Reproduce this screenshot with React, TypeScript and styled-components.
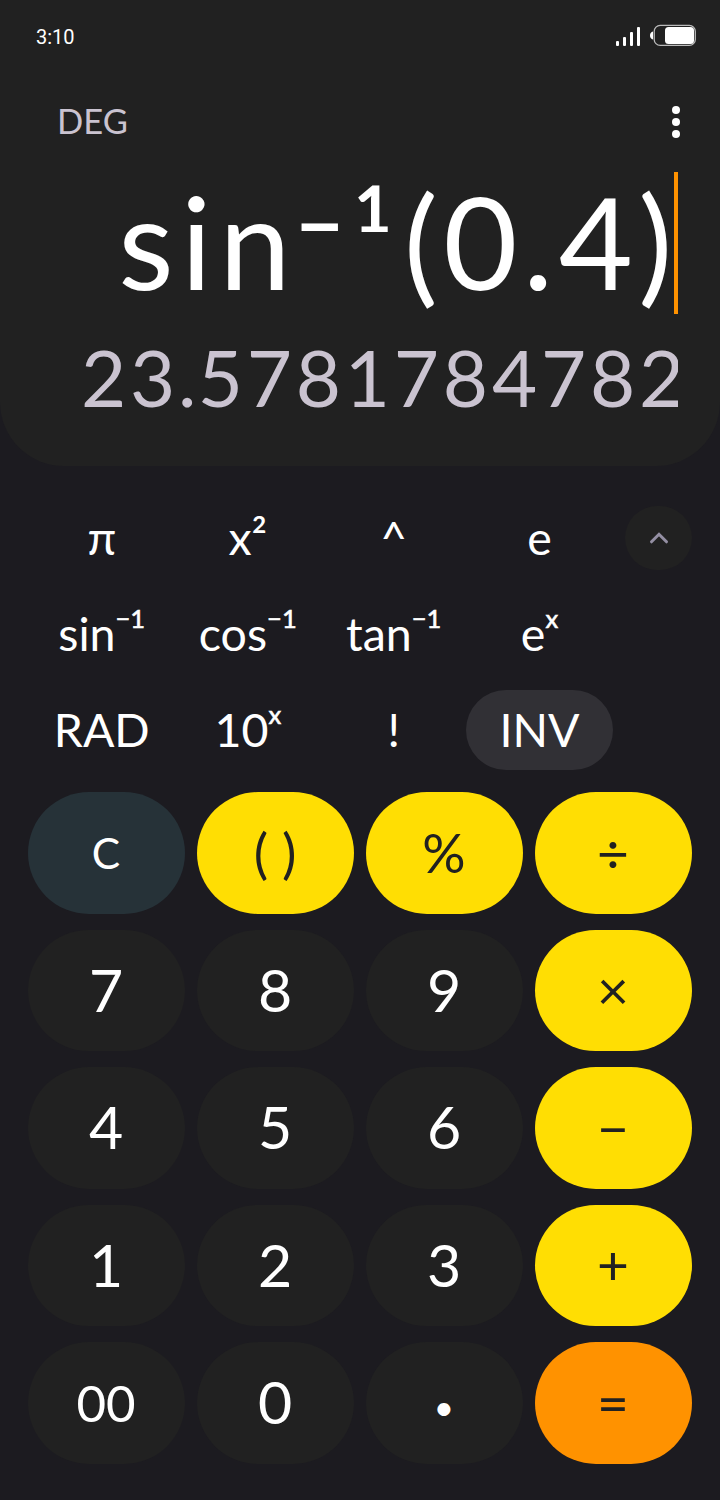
import React, { ReactNode } from "react";
import styled, { createGlobalStyle } from "styled-components";

const GlobalStyle = createGlobalStyle`
  * { box-sizing: border-box; }
  body { margin: 0; background: #1c1b20; }
`;

const Screen = styled.main`
  width: 720px;
  height: 1500px;
  display: flex;
  flex-direction: column;
  overflow: hidden;
  background: #1c1b20;
  color: #fff;
  font-family: Lato, "Noto Sans", sans-serif;
`;

const Display = styled.section`
  height: 466px;
  flex: none;
  display: flex;
  flex-direction: column;
  background: #212121;
  border-radius: 0 0 64px 64px;
`;

const StatusBar = styled.div`
  height: 72px;
  padding: 0 24px 0 36px;
  display: flex;
  align-items: center;
  justify-content: space-between;
`;

const Clock = styled.span`
  font: 400 20px/24px Roboto, sans-serif;
  padding-top: 2px;
`;

const Header = styled.div`
  height: 100px;
  padding: 0 40px 0 57px;
  display: flex;
  align-items: center;
  justify-content: space-between;
`;

const AngleMode = styled.span`
  font-size: 34.5px;
  line-height: 40px;
  padding-bottom: 2px;
  color: #cac3d0;
`;

const Expression = styled.div`
  height: 142px;
  padding-right: 42px;
  display: flex;
  align-items: stretch;
  justify-content: flex-end;
  font-size: 128px;
  line-height: 137px;
  letter-spacing: 0.0425em;
  white-space: pre;
`;

const FunctionName = styled.span`
  letter-spacing: 0.058em;
  margin-right: -2px;
`;

const RaisedMinus = styled.span`
  font-size: 82px;
  font-weight: 700;
  line-height: 0;
  letter-spacing: 0;
  vertical-align: 35px;
  margin-right: 8px;
`;

const RaisedOne = styled.span`
  margin-right: 4px;
  position: relative;
  top: -1px;
`;

const Cursor = styled.span`
  width: 4px;
  flex: none;
  margin-left: -4px;
  background: #ff9200;
`;

const ResultClip = styled.div`
  height: 100px;
  margin: 13px 42px 0 40px;
  overflow: hidden;
  display: flex;
  padding-left: 41px;
  font-size: 78px;
  line-height: 100px;
  letter-spacing: 0.0485em;
  color: #cac3d0;
  white-space: nowrap;
`;

const Point = styled.span`
  margin: 0 -2.5px 0 -1px;
`;

const Functions = styled.section`
  height: 288px;
  margin-top: 24px;
  padding: 0 28px;
  display: flex;
  justify-content: space-between;
`;

const FunctionGrid = styled.div`
  display: grid;
  grid-template-columns: 146px 146px 146px 147px;
  grid-template-rows: repeat(3, 80px);
  row-gap: 16px;
  padding-top: 8px;
`;

const FunctionKey = styled.button<{ $active?: boolean }>`
  border: 0;
  padding: 0 0 2px;
  border-radius: 40px;
  background: ${(p) => (p.$active ? "#313035" : "transparent")};
  color: #fff;
  font: 400 46.5px/78px Lato, "Noto Sans", sans-serif;
  white-space: nowrap;

  &:not(:nth-child(4n)) {
    padding-left: 1.5px;
  }
`;

const Power = styled.span`
  font-size: 25.5px;
  line-height: 0;
  vertical-align: 23px;
  -webkit-text-stroke: 0.6px #fff;
`;

const Collapse = styled.button`
  width: 67px;
  height: 64px;
  margin-top: 16px;
  border: 0;
  padding: 0;
  border-radius: 33px;
  background: #212121;
  display: flex;
  align-items: center;
  justify-content: center;
`;

const Keypad = styled.section`
  margin-top: 14px;
  padding: 0 28px;
  display: grid;
  grid-template-columns: repeat(4, 157px);
  grid-auto-rows: 121.5px;
  gap: 16px 12px;
`;

const tones = {
  digit: { bg: "#212121", fg: "#fff" },
  clear: { bg: "#263238", fg: "#fff" },
  operator: { bg: "#ffde03", fg: "#212121" },
  equals: { bg: "#ff9200", fg: "#212121" },
};

type Tone = keyof typeof tones;

const Key = styled.button<{ $tone: Tone; $size: number; $top?: number; $bottom?: number }>`
  border: 0;
  padding: ${(p) => p.$top ?? 0}px 1px ${(p) => p.$bottom ?? 0}px 0;
  border-radius: 61px;
  background: ${(p) => tones[p.$tone].bg};
  color: ${(p) => tones[p.$tone].fg};
  font: 400 ${(p) => p.$size}px/1.2 Lato, "Noto Sans", sans-serif;
  white-space: pre;
`;

const functionKeys: [string, ReactNode][] = [
  ["pi", "π"],
  ["square", "x²"],
  ["power", "^"],
  ["e", "e"],
  ["asin", <>sin<Power>−1</Power></>],
  ["acos", <>cos<Power>−1</Power></>],
  ["atan", <>tan<Power>−1</Power></>],
  ["exp", <>e<Power>x</Power></>],
  ["rad", "RAD"],
  ["exp10", <>10<Power>x</Power></>],
  ["factorial", "!"],
  ["inv", "INV"],
];

const keys: [string, Tone, number, number?, number?][] = [
  ["C", "clear", 42.5], ["( )", "operator", 54, 2], ["%", "operator", 54, 2], ["÷", "operator", 55, 0, 2],
  ["7", "digit", 59], ["8", "digit", 59], ["9", "digit", 59], ["×", "operator", 55, 0, 2],
  ["4", "digit", 59], ["5", "digit", 59], ["6", "digit", 59], ["−", "operator", 55, 0, 2],
  ["1", "digit", 59], ["2", "digit", 59], ["3", "digit", 59], ["+", "operator", 55, 0, 2],
  ["00", "digit", 51], ["0", "digit", 59], ["•", "digit", 35, 7], ["=", "equals", 55, 0, 1],
];

const StatusIcons = () => (
  <svg width="82" height="24" viewBox="614 24 82 24" fill="#fff">
    <rect x="616" y="41" width="3" height="5" rx="1" />
    <rect x="623" y="37" width="3" height="9" rx="1" />
    <rect x="630" y="32" width="3" height="14" rx="1" />
    <rect x="637" y="27" width="3" height="19" rx="1" />
    <path d="M653 31.5C649 32 649 39 653 39.5Z" />
    <rect x="654.2" y="25.4" width="41.1" height="20" rx="6" fill="none" stroke="#bbb" strokeWidth="1.3" />
    <rect x="665" y="27" width="29" height="17" rx="3.5" />
  </svg>
);

export default function App() {
  return (
    <Screen>
      <GlobalStyle />
      <Display>
        <StatusBar>
          <Clock>3:10</Clock>
          <StatusIcons />
        </StatusBar>
        <Header>
          <AngleMode>DEG</AngleMode>
          <svg width="8" height="32" fill="#fff">
            <circle cx="4" cy="4" r="4" />
            <circle cx="4" cy="16" r="4" />
            <circle cx="4" cy="28" r="4" />
          </svg>
        </Header>
        <Expression>
          <span>
            <FunctionName>sin</FunctionName>
            <RaisedMinus>−</RaisedMinus>
            <RaisedOne>¹</RaisedOne>(0.4)
          </span>
          <Cursor />
        </Expression>
        <ResultClip>
          <span>23<Point>.</Point>5781784782</span>
        </ResultClip>
      </Display>
      <Functions>
        <FunctionGrid>
          {functionKeys.map(([id, label]) => (
            <FunctionKey key={id} $active={id === "inv"}>{label}</FunctionKey>
          ))}
        </FunctionGrid>
        <Collapse aria-label="Collapse">
          <svg width="20" height="14" fill="none" stroke="#948fa3" strokeWidth="3" strokeLinecap="round">
            <path d="M2.5 10.8 10 3.3 17.5 10.8" />
          </svg>
        </Collapse>
      </Functions>
      <Keypad>
        {keys.map(([label, tone, size, top, bottom]) => (
          <Key key={label} $tone={tone} $size={size} $top={top} $bottom={bottom}>{label}</Key>
        ))}
      </Keypad>
    </Screen>
  );
}
